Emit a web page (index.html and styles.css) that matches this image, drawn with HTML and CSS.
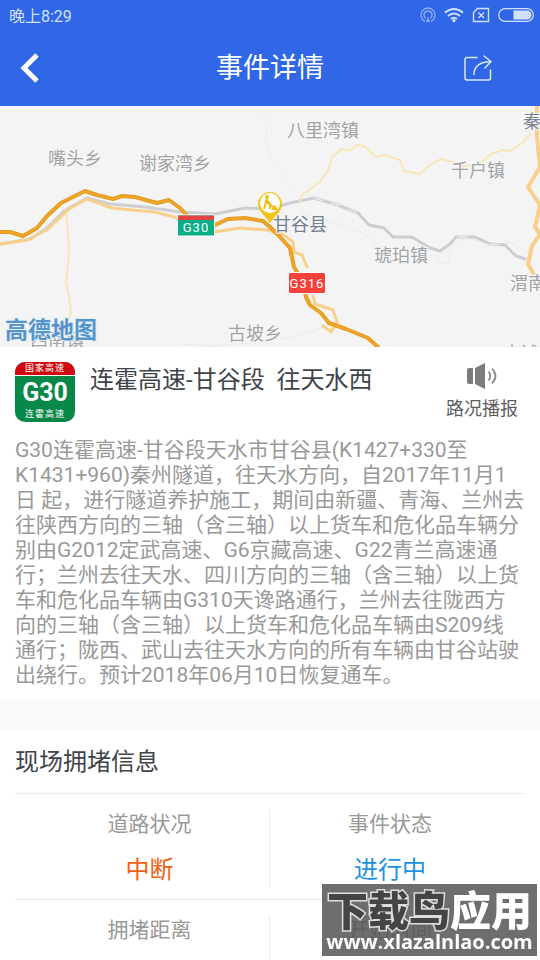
FILE: index.html
```
<!DOCTYPE html>
<html lang="zh-CN">
	<head>
		<meta charset="utf-8">
		<meta name="viewport" content="width=device-width, initial-scale=1">
		<title>事件详情</title>
		<link rel="stylesheet" href="styles.css">
	</head>
	<body>
		<header class="top">
			<!-- 状态栏 -->
			<div class="status">
				<span>晚上8:29</span>
				<div class="status_icons">
					<svg class="dim" width="16" height="16" viewBox="0 0 16 16" fill="none" stroke="currentColor" stroke-width="1.3">
						<path d="M5 14.3A7 7 0 1 1 11 14.3M5.6 11.2A4 4 0 1 1 10.4 11.2"/>
						<path d="M8 9.5L6 15H10Z" fill="currentColor" stroke="none"/>
					</svg>
					<svg width="20" height="16" viewBox="0 0 20 16" fill="none" stroke="currentColor" stroke-width="2">
						<path d="M1 5.6Q10 -1.6 19 5.6M4 9Q10 4 16 9M7 12Q10 9.4 13 12"/>
						<circle cx="10" cy="13.6" r="1.6" fill="currentColor" stroke="none"/>
					</svg>
					<svg width="18" height="16" viewBox="0 0 18 16" fill="none" stroke="currentColor" stroke-width="1.4">
						<path d="M5.5 1.5H16.5V14.5H1.5V5.5ZM6.5 5.5L12 11M12 5.5L6.5 11"/>
					</svg>
					<svg width="36" height="16" viewBox="0 0 36 16">
						<rect x="0.7" y="1.7" width="34.6" height="12.6" rx="6.3" fill="none" stroke="currentColor" stroke-width="1.2"/>
						<path d="M15.500 3.500H29A4.500 4.500 0 0 1 29 12.500H15.500Z" fill="currentColor"/>
					</svg>
				</div>
			</div>
			<!-- 标题栏 -->
			<div class="nav">
				<button class="nav_btn" type="button" aria-label="返回">
					<svg width="20" height="30" viewBox="0 0 20 30" fill="none" stroke="currentColor" stroke-width="5"><path d="M17 2L4 15L17 28"/></svg>
				</button>
				<h1>事件详情</h1>
				<button class="nav_btn share" type="button" aria-label="分享">
					<svg width="28" height="28" viewBox="0 0 28 28" fill="none" stroke="currentColor" stroke-width="1.5" stroke-linecap="round" stroke-linejoin="round">
						<path d="M13 3.500H3Q1 3.500 1 5.500V24Q1 26 3 26H24.500Q26.500 26 26.500 24V16"/>
						<path d="M10 20.500Q10 8.500 26 7.500M20 2L27 7.500L21 14"/>
					</svg>
				</button>
			</div>
		</header>

		<!-- 地图 -->
		<svg class="map" viewBox="0 0 540 241" preserveAspectRatio="xMidYMid slice" role="img" aria-label="地图">
			<g fill="none" stroke-linejoin="round" stroke-linecap="round">
				<!-- 河流 -->
				<g stroke="#e3eef4" stroke-width="1">
					<path d="M262 4L267 18L266 40L271 52L282 68L292 80L298 90" stroke-dasharray="5 3"/>
					<path d="M302 106L325 113L345 120L362 127L380 140L410 147L437 150L440 157L448 158L451 140L462 132L500 138L508 135L516 139L530 148"/>
					<path d="M180 238L215 240L260 236L295 231L325 221"/>
				</g>
				<!-- 铁路 -->
				<g stroke="#cdced2" stroke-width="3">
					<path d="M0 138L30 133L47 122L64 105L87 92L110 98L145 101L180 106L215 108L245 102L270 103L290 97L314 92L338 99L358 107L369 119L384 122L393 131L412 131L430 142L440 145L450 138L456 131L475 131L490 138L505 139L516 150L525 153"/>
				</g>
				<path d="M314 92L338 99L358 107M458 131L475 131M490 138L502 139" stroke="#f4f4f4" stroke-width="1" stroke-dasharray="9 9"/>
				<!-- 乡道 -->
				<g stroke="#f7e6b6" stroke-width="2">
					<path d="M66 104L68 125L69 148L66 176L69 190L71 207L67 217"/>
					<path d="M300 96L302 89L321 75L329 62L332 51L342 43L350 45L357 39L364 40L376 51L384 49L400 54L404 65L420 68L430 59L441 53L452 56L463 60L480 58L491 48L503 44L510 45L522 37L530 28"/>
				</g>
				<!-- 国道 -->
				<g stroke="#f9cf8c" stroke-width="3">
					<path d="M0 138L28 134L48 123L69 103L87 93L112 102L132 104L155 106L178 112M214 126L240 122L268 124L284 129L293 136L294 146L302 149L307 161M313 190L315 198L333 204L337 216L331 226L323 220"/>
					<path d="M537 0L537 31L540 61L528 81L540 99L535 121L540 128L532 140L528 158L537 174L540 178" stroke-width="4"/>
				</g>
				<!-- 高速 -->
				<path d="M0 126L10 126L23 130L37 122L47 110L61 97L85 85L97 89L113 93L122 90L135 91L157 97L169 94L180 102L195 118M213 120L228 113L245 112L263 115L270 121L280 131L290 142L294 161L303 176L306 191L310 199L321 207L329 217L346 223L368 232L378 241" stroke="#e29d1c" stroke-width="4"/>
				<path d="M0 126L10 126L23 130L37 122L47 110L61 97L85 85L97 89L113 93L122 90L135 91L157 97L169 94L180 102L195 118M213 120L228 113L245 112L263 115L270 121L280 131L290 142L294 161L303 176L306 191L310 199L321 207L329 217L346 223L368 232L378 241" stroke="#f0a42a" stroke-width="2"/>
			</g>
			<g class="place">
				<text x="287" y="31">八里湾镇</text>
				<text x="48" y="59">嘴头乡</text>
				<text x="139" y="64">谢家湾乡</text>
				<text x="451" y="71">千户镇</text>
				<text x="374" y="156">琥珀镇</text>
				<text x="510" y="184">渭南镇</text>
				<text x="228" y="234">古坡乡</text>
				<text x="30" y="240">西南镇</text>
				<text x="503" y="254">中滩镇</text>
			</g>
			<g class="place county">
				<text x="273" y="125">甘谷县</text>
				<text x="523" y="22">秦安县</text>
			</g>
			<!-- 道路编号 -->
			<g class="road_no">
				<rect x="177.500" y="109" width="37" height="21" rx="1" fill="#0bae85" stroke="#fff"/>
				<path d="M178 109.500H214V114H178Z" fill="#e54243"/>
				<text x="196" y="126">G30</text>
				<rect x="288.500" y="166.500" width="37" height="21" rx="2" fill="#f5403c" stroke="#fff"/>
				<text x="307" y="182">G316</text>
			</g>
			<!-- 施工标记 -->
			<path d="M270 117L261 106A12 12 0 1 1 279 106Z" fill="#f4c51b"/>
			<circle cx="270" cy="97" r="10" fill="#fff"/>
			<g fill="none" stroke="#eebc13" stroke-width="2">
				<circle cx="267" cy="91" r="2" fill="#eebc13" stroke="none"/>
				<path d="M267 93L264 103M267 94L270 98L270 103M265 95L275 102"/>
				<path d="M271 104L275 99L278 104Z" fill="#eebc13" stroke="none"/>
			</g>
			<text class="map_logo" x="5" y="232">高德地图</text>
		</svg>

		<main>
			<section class="event">
				<div class="event_head">
					<div class="sign">
						<div class="sign_top">国家高速</div>
						<div class="sign_no">G30</div>
						<div class="sign_name">连霍高速</div>
					</div>
					<h2>连霍高速-甘谷段&nbsp; 往天水西</h2>
					<button class="voice" type="button">
						<svg width="32" height="26" viewBox="0 0 32 26">
							<path d="M3 5H7V21H3Q1 21 1 19V7Q1 5 3 5ZM9 5L19 0V26L9 21Z" fill="#7c7c7c"/>
							<path d="M22.500 8.500Q26 13 22.500 17.500M26 5.500Q33 13 26 20.500" fill="none" stroke="#8c8c8c" stroke-width="1.800"/>
						</svg>
						<span>路况播报</span>
					</button>
				</div>
				<p class="des">G30连霍高速-甘谷段天水市甘谷县(K1427+330至K1431+960)秦州隧道，往天水方向，自2017年11月1日 起，进行隧道养护施工，期间由新疆、青海、兰州去往陕西方向的三轴（含三轴）以上货车和危化品车辆分别由G2012定武高速、G6京藏高速、G22青兰高速通行；兰州去往天水、四川方向的三轴（含三轴）以上货车和危化品车辆由G310天谗路通行，兰州去往陇西方向的三轴（含三轴）以上货车和危化品车辆由S209线<br>通行；陇西、武山去往天水方向的所有车辆由甘谷站驶出绕行。预计2018年06月10日恢复通车。</p>
			</section>

			<section class="info">
				<h2>现场拥堵信息</h2>
				<dl class="info_row">
					<div class="cell">
						<dt>道路状况</dt>
						<dd class="orange">中断</dd>
					</div>
					<div class="cell">
						<dt>事件状态</dt>
						<dd class="blue">进行中</dd>
					</div>
				</dl>
				<dl class="info_row">
					<div class="cell">
						<dt>拥堵距离</dt>
					</div>
					<div class="cell">
						<dt>开始时间</dt>
					</div>
				</dl>
			</section>
		</main>

		<div class="mark">
			<div class="mark_name"><span>下载鸟</span>应用</div>
			<div class="mark_url">www.xlazalnlao.com</div>
		</div>
	</body>
</html>
```

FILE: styles.css
```
*{
	box-sizing: border-box;
}
body{
	margin: 0;
	background: #f9f9f9;
	color: #40444a;
	font-family: Roboto, "Noto Sans CJK SC", sans-serif;
}
h1, h2, p, dl, dd{
	margin: 0;
	font-weight: 400;
}
button{
	padding: 0;
	border: 0;
	background: none;
	color: inherit;
	font-family: inherit;
}
svg{
	display: block;
}

/* 顶部 */
.top{
	background: #2f67e6;
	color: #fff;
}
.status{
	display: flex;
	justify-content: space-between;
	align-items: center;
	height: 30px;
	padding: 0 6px 0 9px;
	color: #d3e0fb;
	font-size: 16px;
}
.status_icons{
	display: flex;
	gap: 8px;
}
.status_icons .dim{
	opacity: .6;
}
.nav{
	display: grid;
	grid-template-columns: 80px 1fr 80px;
	align-items: center;
	height: 76px;
}
.nav h1{
	font-size: 27px;
	line-height: 36px;
	text-align: center;
}
.nav_btn{
	padding-left: 20px;
}
.nav_btn.share{
	padding-left: 4px;
	color: #d9e8ff;
}

/* 地图 */
.map{
	width: 100%;
	height: 241px;
	background: #f4f4f4;
}
.map text{
	paint-order: stroke;
	stroke: #f8f8f8;
	stroke-width: 2px;
}
.place{
	fill: #a0a3a5;
	font-size: 18px;
}
.county{
	fill: #75808f;
}
.map .road_no text{
	fill: #fff;
	stroke: none;
	font-size: 13px;
	letter-spacing: 1px;
	text-anchor: middle;
}
.map .map_logo{
	fill: #5795c9;
	stroke: #e4eff8;
	font-size: 23px;
	font-weight: 700;
}

/* 事件 */
.event{
	padding: 15px 15px 12px;
	background: #fff;
}
.event_head{
	display: flex;
	align-items: flex-start;
	gap: 15px;
}
.event_head h2{
	flex: 1;
	font-size: 24px;
	line-height: 36px;
}
.sign{
	width: 60px;
	height: 60px;
	border-radius: 10px;
	overflow: hidden;
	background: #078848;
	color: #fff;
	text-align: center;
}
.sign_top{
	height: 14px;
	border-bottom: 1px solid #fff;
	background: #cf0a10;
	font-size: 9px;
	line-height: 13px;
	letter-spacing: 1px;
}
.sign_no{
	font-size: 25px;
	font-weight: 700;
	line-height: 34px;
}
.sign_name{
	font-size: 9px;
	line-height: 9px;
	letter-spacing: 1px;
}
.voice{
	display: flex;
	flex-direction: column;
	align-items: center;
	gap: 8px;
	padding: 1px 7px 0 0;
	color: #5e5e5e;
	font-size: 18px;
	line-height: 24px;
}
.des{
	margin-top: 16px;
	color: #999;
	font-size: 21px;
	line-height: 25px;
}

/* 拥堵信息 */
.info{
	margin-top: 30px;
	padding: 2px 15px 40px;
	background: #fff;
}
.info h2{
	font-size: 24px;
	line-height: 61px;
}
.info_row{
	display: grid;
	grid-template-columns: 1fr 1fr;
	padding: 15px 15px 11px;
	border-top: 1px solid #ececec;
}
.cell{
	min-height: 79px;
	text-align: center;
}
.cell:first-child{
	border-right: 1px solid #ececec;
}
.cell dt{
	color: #999;
	font-size: 21px;
	line-height: 30px;
}
.cell dd{
	margin-top: 13px;
	font-size: 24px;
	line-height: 36px;
}
.orange{
	color: #ed6112;
}
.blue{
	color: #1b91e0;
}

/* 水印 */
.mark{
	position: fixed;
	right: 3px;
	bottom: 4px;
	width: 215px;
	height: 72px;
	padding-top: 8px;
	background: rgba(85, 85, 85, .85);
	color: #fff;
	text-align: center;
	white-space: nowrap;
}
.mark_name{
	font-size: 41px;
	font-weight: 900;
	line-height: 40px;
}
.mark_name span{
	color: #444;
	-webkit-text-stroke: 3px #ddd;
	paint-order: stroke;
}
.mark_url{
	font-family: "Open Sans", sans-serif;
	font-size: 20px;
	font-weight: 700;
	line-height: 20px;
}
```
